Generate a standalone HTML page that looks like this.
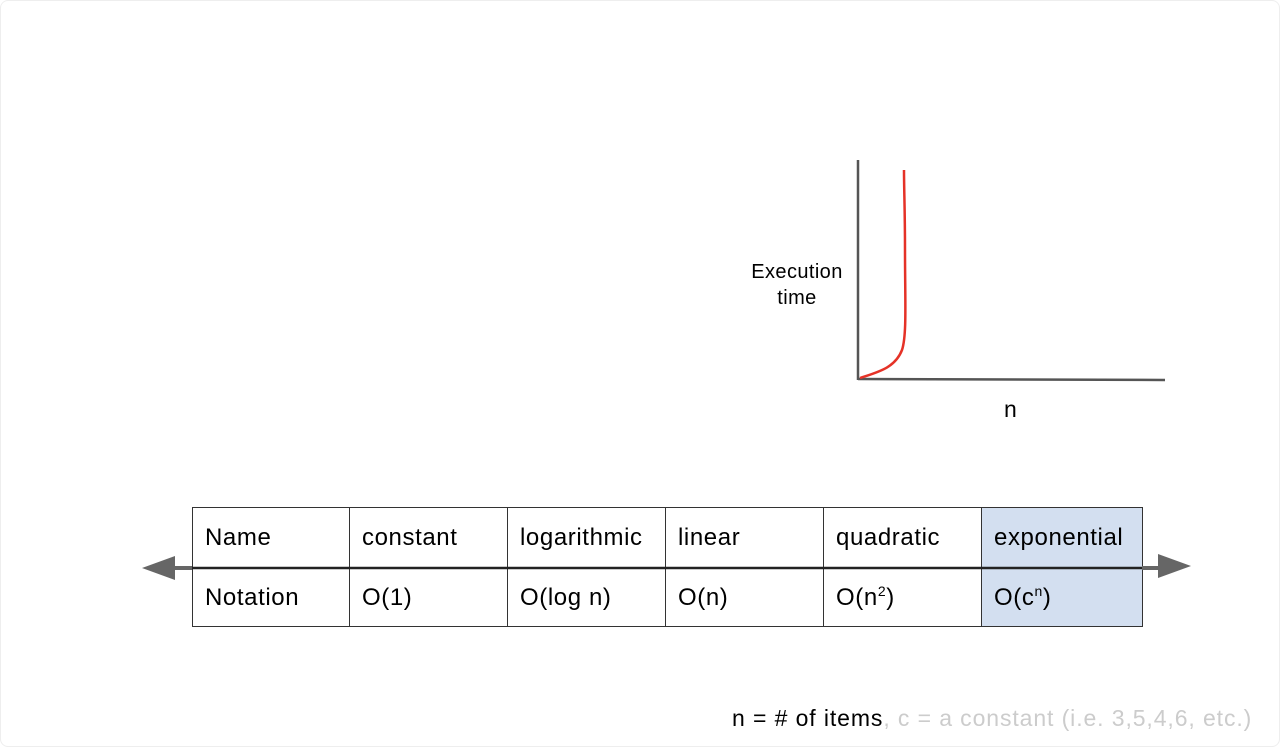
<!DOCTYPE html>
<html><head><style>
html,body{margin:0;padding:0;background:#fff;}
body{width:1280px;height:747px;position:relative;overflow:hidden;font-family:"Liberation Sans",Arial,sans-serif;color:#000;}
.frame{position:absolute;left:0;top:0;width:1278px;height:745px;border:1px solid #eee;border-radius:8px;}
table{position:absolute;left:192px;top:507px;border-collapse:collapse;font-size:24px;letter-spacing:0.6px;}
td{border:1.5px solid #333;padding:0 12px;vertical-align:middle;box-sizing:border-box;}
td.b{background:#d3dff0;}
sup{font-size:14px;vertical-align:9px;line-height:0;}
.lbl{position:absolute;font-size:20px;letter-spacing:0.4px;text-align:center;}
</style></head><body>
<div class="frame"></div>
<svg width="1280" height="747" style="position:absolute;left:0;top:0">
<line x1="858" y1="160" x2="858" y2="380" stroke="#555" stroke-width="2.5"/>
<line x1="858" y1="379" x2="1165" y2="380" stroke="#555" stroke-width="2.5"/>
<path d="M860 378 C878 372 895 368 902 350 C907 335 905 300 905 250 C905 210 904 190 904 170" stroke="#e53227" stroke-width="2.5" fill="none"/>
</svg>
<div class="lbl" style="left:742px;top:259px;width:110px;line-height:26px;">Execution<br>time</div>
<div class="lbl" style="left:1004px;top:396px;font-size:23px;">n</div>
<table>
<tr style="height:60px"><td style="width:157px">Name</td><td style="width:158px">constant</td><td style="width:158px">logarithmic</td><td style="width:158px">linear</td><td style="width:158px">quadratic</td><td class="b" style="width:161px">exponential</td></tr>
<tr style="height:59px"><td style="padding-top:2px">Notation</td><td style="padding-top:2px">O(1)</td><td style="padding-top:2px">O(log n)</td><td style="padding-top:2px">O(n)</td><td style="padding-top:2px">O(n<sup>2</sup>)</td><td class="b" style="padding-top:2px">O(c<sup>n</sup>)</td></tr>
</table>
<svg width="1280" height="747" style="position:absolute;left:0;top:0">
<line x1="170" y1="568" x2="1160" y2="568" stroke="#222" stroke-width="2.5"/>
<line x1="170" y1="568" x2="192" y2="568" stroke="#666" stroke-width="4"/>
<line x1="1142" y1="568" x2="1160" y2="568" stroke="#666" stroke-width="4"/>
<polygon points="142,568 175,556 175,580" fill="#666"/>
<polygon points="1191,566 1158,554 1158,578" fill="#666"/>
</svg>
<div style="position:absolute;left:732px;top:705px;font-size:23px;letter-spacing:0.9px;white-space:nowrap;">n = # of items<span style="color:#ccc">, c = a constant (i.e. 3,5,4,6, etc.)</span></div>
</body></html>
